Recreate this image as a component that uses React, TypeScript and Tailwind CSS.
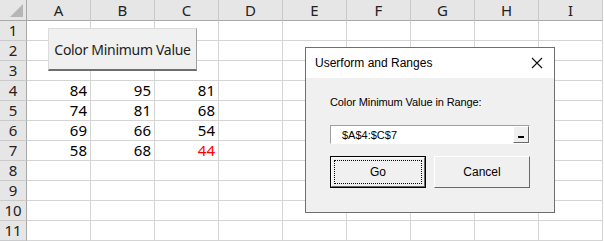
import type { ReactNode } from 'react';

const COLS = ['A', 'B', 'C', 'D', 'E', 'F', 'G', 'H', 'I'];
const ROWS = [1, 2, 3, 4, 5, 6, 7, 8, 9, 10, 11];

const DATA: Record<number, string[]> = {
  4: ['84', '95', '81'],
  5: ['74', '81', '68'],
  6: ['69', '66', '54'],
  7: ['58', '68', '44'],
};

function Cell({ r, c }: { r: number; c: number }) {
  const v = DATA[r]?.[c];
  const red = r === 7 && c === 2;
  return (
    <div className={`h-[20px] border-r border-b border-[#d4d4d4] bg-white flex items-center justify-end pr-[3px] text-[15px] leading-none ${red ? 'text-[#ff0000]' : 'text-black'}`}>
      {v}
    </div>
  );
}

function Bevel({ children, className = '' }: { children: ReactNode; className?: string }) {
  return (
    <div className={`bg-[#f0f0f0] border border-t-white border-l-white border-r-[#696969] border-b-[#696969] ${className}`}>
      {children}
    </div>
  );
}

export default function App() {
  return (
    <div className="relative w-[604px] h-[241px] overflow-hidden bg-white font-['Noto_Sans',sans-serif]">
      <div className="grid grid-cols-[27px_repeat(9,64px)] grid-rows-[21px_repeat(11,20px)]">
        {/* corner */}
        <div className="relative bg-[#e6e6e6] border-r border-b border-[#a8a8a8]">
          <div className="absolute right-[3px] bottom-[3px] w-0 h-0 border-l-[13px] border-l-transparent border-b-[13px] border-b-[#b6b6b6]" />
        </div>
        {COLS.map(c => (
          <div key={c} className="bg-[#e6e6e6] border-r border-b border-r-[#cacaca] border-b-[#a8a8a8] flex items-center justify-center text-[15px] text-[#222]">
            {c}
          </div>
        ))}
        {ROWS.map(r => (
          <div key={r} className="contents">
            <div className="bg-[#e6e6e6] border-r border-b border-r-[#a8a8a8] border-b-[#cacaca] flex items-center justify-center text-[15px] text-[#222] h-[20px]">
              {r}
            </div>
            {COLS.map((_, c) => <Cell key={c} r={r} c={c} />)}
          </div>
        ))}
      </div>

      {/* sheet button */}
      <div className="absolute left-[48px] top-[28px] w-[149px] h-[43px] bg-[#f0f0f0] border border-[#dcdcdc] border-r-[#a0a0a0] border-b-[#6e6e6e] border-b-2 flex items-center justify-center whitespace-nowrap text-[14px] tracking-[-0.3px] text-[#222]">
        Color Minimum Value
      </div>

      {/* userform */}
      <div className="absolute left-[305px] top-[47px] w-[250px] h-[166px] border border-[#6e6e6e] bg-[#f0f0f0] flex flex-col font-['Liberation_Sans',sans-serif] text-[11px] text-black">
        <div className="h-[30px] bg-white flex items-center justify-between pl-[9px] pr-[10px]">
          <span className="text-[12px]">Userform and Ranges</span>
          <svg width="12" height="12" viewBox="0 0 12 12" className="mr-[1px]">
            <path d="M1 1L11 11M11 1L1 11" stroke="#111" strokeWidth="1.1" />
          </svg>
        </div>
        <div className="flex-1 flex flex-col pl-[24px] pr-[24px]">
          <div className="mt-[17px] h-[14px] flex items-center tracking-[-0.1px]">Color Minimum Value in Range:</div>
          <div className="mt-[16px] w-[200px] h-[19px] bg-white border border-[#a0a0a0] border-r-white border-b-white flex items-center">
            <span className="flex-1 pl-[11px] pt-[1px]">$A$4:$C$7</span>
            <Bevel className="w-[16px] h-[17px] flex items-end justify-center pb-[4px]">
              <div className="w-[6px] h-[2px] bg-black" />
            </Bevel>
          </div>
          <div className="mt-[12px] flex gap-[8px]">
            <div className="w-[96px] h-[32px] border border-black">
              <div className="w-full h-full bg-[#f0f0f0] border border-t-white border-l-white border-r-[#696969] border-b-[#696969] p-[2px]">
                <div className="w-full h-full border border-dotted border-black flex items-center justify-center text-[12px]">Go</div>
              </div>
            </div>
            <Bevel className="w-[96px] h-[32px] flex items-center justify-center text-[12px]">Cancel</Bevel>
          </div>
        </div>
      </div>
    </div>
  );
}
